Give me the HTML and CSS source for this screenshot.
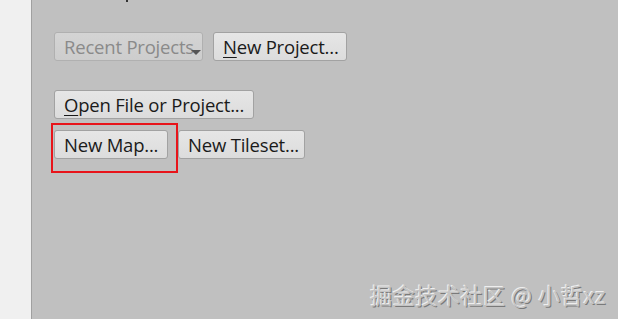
FILE: index.html
```html
<!DOCTYPE html>
<html>
<head>
<meta charset="utf-8">
<link rel="stylesheet" href="styles.css">
</head>
<body>
<div class="app">
  <div class="sidebar"></div>
  <div class="main">
    <span class="heading-mark"></span>
    <div class="row row-top">
      <button class="btn btn-disabled btn-recent">Recent Projects<span class="caret"></span></button>
      <button class="btn btn-newproject"><u>N</u>ew Project...</button>
    </div>
    <div class="row row-open">
      <button class="btn btn-open"><u>O</u>pen File or Project...</button>
    </div>
    <div class="row row-new">
      <span class="highlight-wrap">
        <button class="btn btn-newmap">New Map...</button>
        <span class="highlight"></span>
      </span>
      <button class="btn btn-tileset">New Tileset...</button>
    </div>
    <div class="watermark">掘金技术社区 @ 小哲xz</div>
  </div>
</div>
</body>
</html>
```
FILE: styles.css
```css
html, body {
  margin: 0;
  padding: 0;
  width: 618px;
  height: 319px;
  overflow: hidden;
}
.app {
  display: flex;
  height: 319px;
}
.sidebar {
  width: 31px;
  background: #f0f0f0;
  border-right: 1px solid #a0a0a0;
}
.main {
  flex: 1;
  background: #c0c0c0;
  position: relative;
  padding-left: 22px;
  font-family: "Open Sans", "Liberation Sans", sans-serif;
}
.heading-mark {
  position: absolute;
  left: 94px;
  top: 0;
  width: 2px;
  height: 2px;
  background: #333;
}
.row {
  display: flex;
  gap: 10px;
}
.row-top { margin-top: 32px; }
.row-open { margin-top: 29px; }
.row-new { margin-top: 11px; }
.btn {
  font-family: "Open Sans", "Liberation Sans", sans-serif;
  font-size: 18.5px;
  height: 29px;
  padding: 0 0 0 9px;
  color: #1a1a1a;
  background: linear-gradient(#e6e6e6, #dcdcdc);
  border: 1px solid #a2a2a2;
  border-radius: 3px;
  line-height: 26px;
  white-space: nowrap;
  position: relative;
  text-align: left;
  letter-spacing: -0.2px;
}
.btn u { text-decoration-thickness: 1px; text-underline-offset: 3px; }
.btn-disabled {
  color: #8a8a8a;
  background: linear-gradient(#d4d4d4, #cdcdcd);
  border-color: #b0b0b0;
}
.btn-recent { width: 149px; overflow: hidden; }
.btn-newproject { width: 134px; }
.btn-open { width: 200px; }
.btn-newmap { width: 114px; }
.btn-tileset { width: 127px; }
.caret {
  position: absolute;
  right: 1px;
  bottom: 5px;
  width: 0;
  height: 0;
  border-left: 5px solid transparent;
  border-right: 5px solid transparent;
  border-top: 5px solid #555;
}
.highlight-wrap { position: relative; display: flex; }
.highlight {
  position: absolute;
  left: -3px;
  top: -7px;
  right: -10px;
  bottom: -14px;
  border: 2px solid #e8141a;
}
.watermark {
  position: absolute;
  right: 12px;
  bottom: 12px;
  font-family: "Noto Sans CJK SC", sans-serif;
  font-size: 22px;
  letter-spacing: 0.6px;
  color: #c4c4c4;
  text-shadow: -1px -1px 0 #eeeeee, 1px 1px 0 #7a7a7a;
  line-height: 26px;
}
```
